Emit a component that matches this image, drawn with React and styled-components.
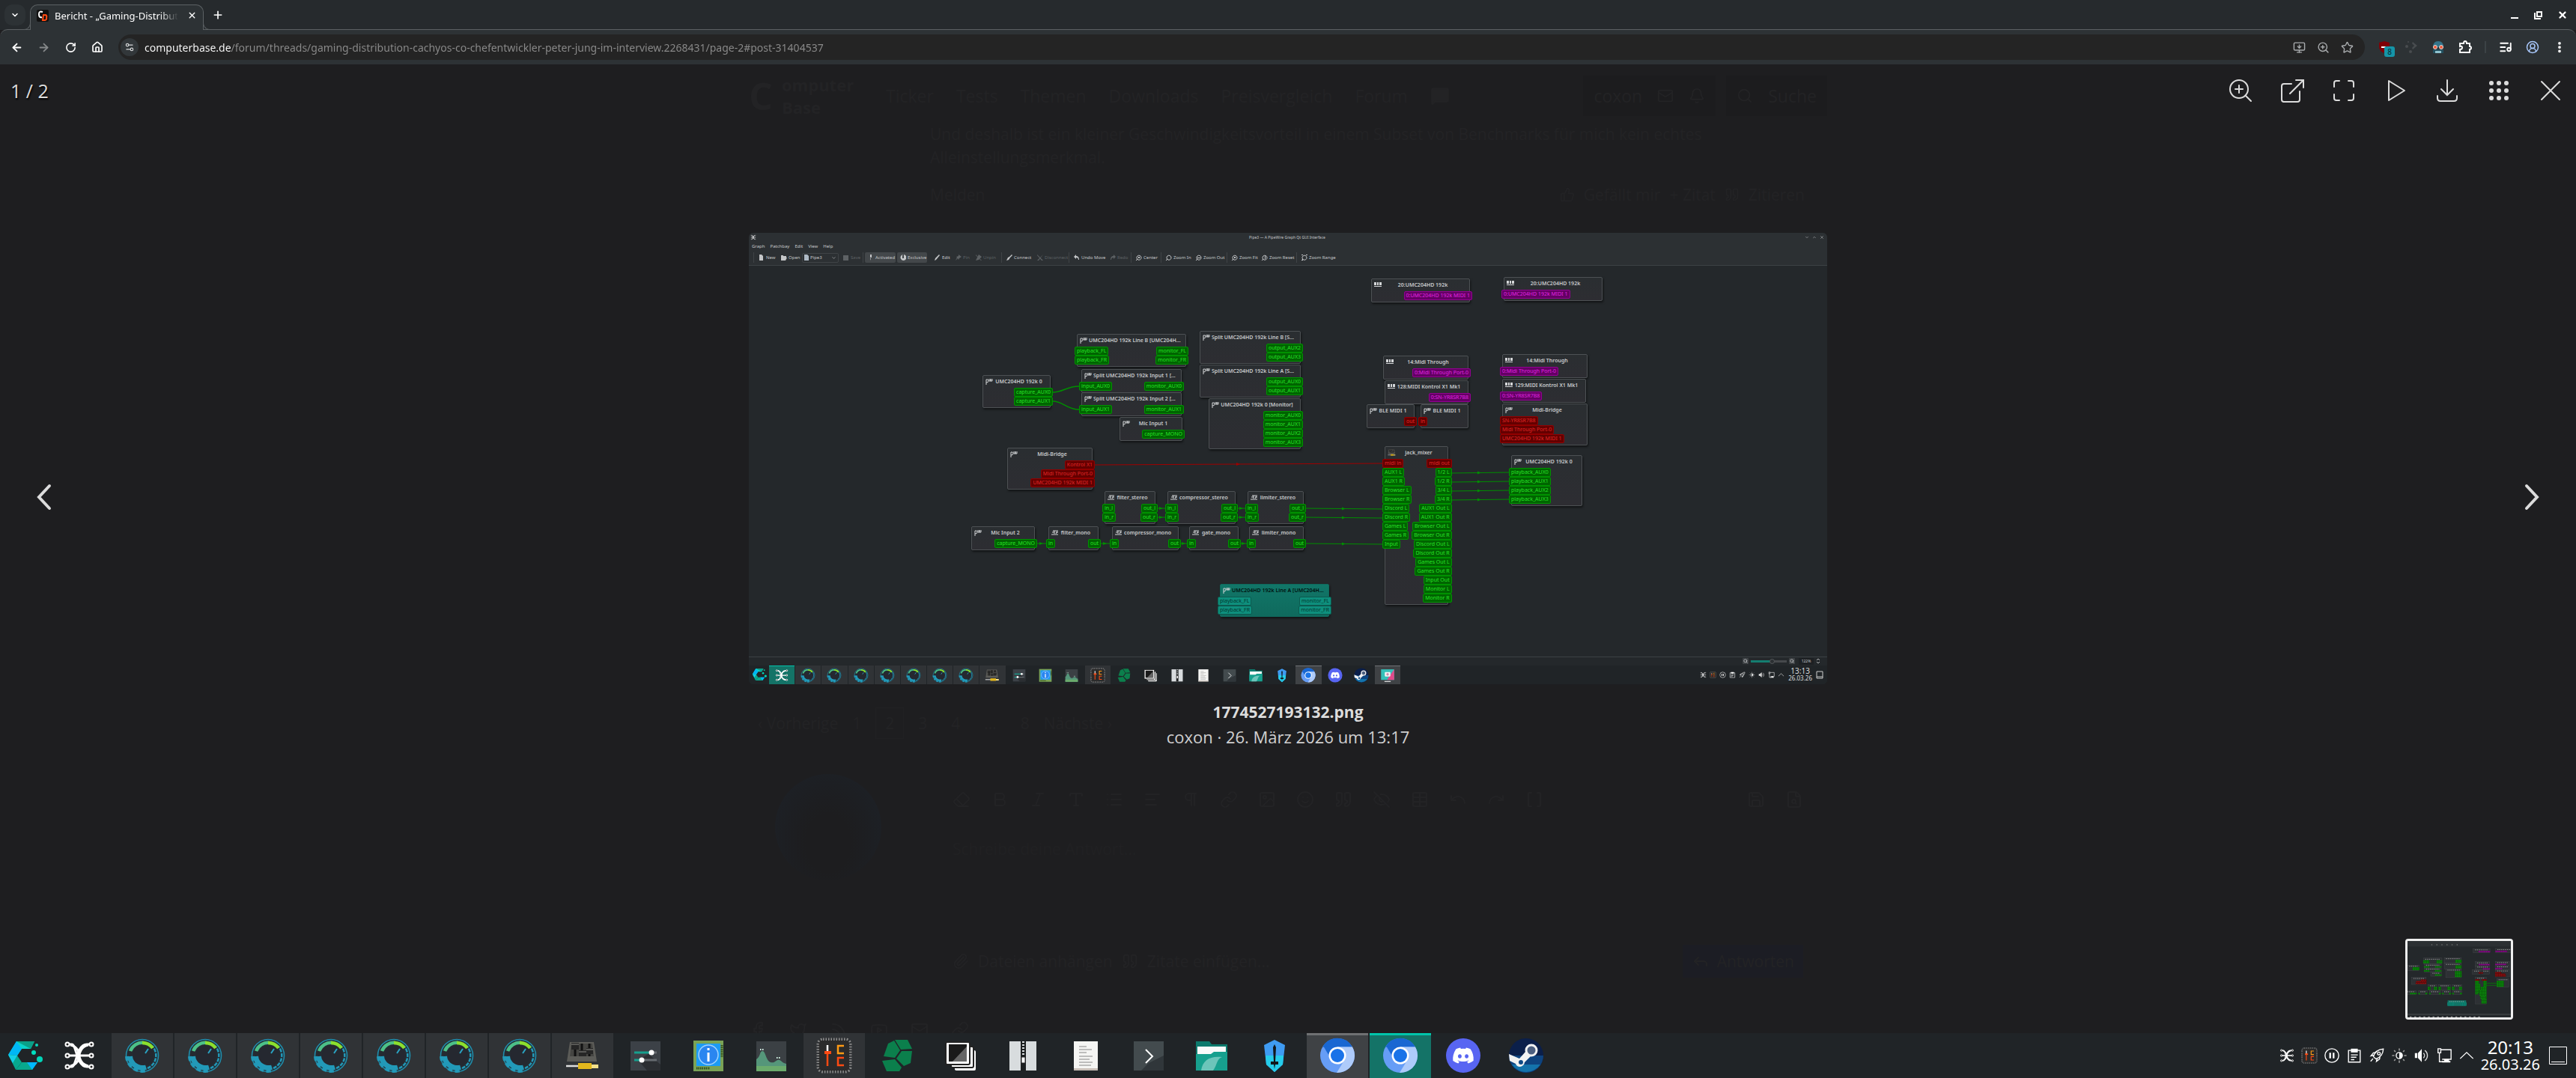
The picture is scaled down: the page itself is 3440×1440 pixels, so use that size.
import React from 'react';
import styled, { createGlobalStyle, css } from 'styled-components';
import {
  ArrowLeft, ArrowRight, RotateCw, House, Settings2, MonitorDown, ZoomIn, Star,
  ListMusic, CircleUserRound, EllipsisVertical, Plus, X, ChevronDown, ChevronUp,
  Mail, Bell, Search, ThumbsUp, Quote, Paperclip, Reply, Link, Image, Smile,
  EyeOff, Table, List, AlignLeft, Pilcrow, Bold, Italic, Type, Eraser, Undo, Redo,
  Brackets, Save, FileSearch, MessageSquare, Facebook, Twitter, Rss, Youtube,
} from 'lucide-react';
import { FaDiscord, FaSteamSymbol } from 'react-icons/fa';

const UI_FONT = '"Noto Sans", sans-serif';
const PAGE_FONT = '"Open Sans", sans-serif';

const COLORS = {
  page: '#1e1e20',
  ghost: '#232325',
  strip: '#262a2d',
  toolbar: '#2d3235',
  outline: '#5c6164',
  panel: '#202427',
  panelItem: '#303336',
  accent: '#147367',
  accentLine: '#00c5ab',
  light: '#dcdcdc',
};

const PORTS = {
  green: { fill: '#006400', line: '#009200', text: '#27e027' },
  purple: { fill: '#640064', line: '#920092', text: '#e027e0' },
  red: { fill: '#640000', line: '#920000', text: '#e02727' },
  teal: { fill: '#0e8f7d', line: '#0c5a4f', text: '#02382f' },
};

const GlobalStyle = createGlobalStyle`
  *, *::before, *::after { box-sizing: border-box; }
  body { margin: 0; background: ${COLORS.page}; }
  button { border: 0; padding: 0; background: none; color: inherit; font: inherit; }
  svg { display: block; flex: none; }
`;

/* ---------- data ---------- */

const g = names => names.map(name => ({ name, kind: 'green' }));
const r = names => names.map(name => ({ name, kind: 'red' }));
const p = names => names.map(name => ({ name, kind: 'purple' }));

const NODES = [
  { x: 312, y: 190, w: 91, title: 'UMC204HD 192k 0', icon: 'pw', out: g(['capture_AUX0', 'capture_AUX1']) },
  { x: 438, y: 135, w: 146, title: 'UMC204HD 192k Line B [UMC204H...', icon: 'pw', in: g(['playback_FL', 'playback_FR']), out: g(['monitor_FL', 'monitor_FR']) },
  { x: 444, y: 182, w: 134, title: 'Split UMC204HD 192k Input 1 [...', icon: 'pw', in: g(['input_AUX0']), out: g(['monitor_AUX0']) },
  { x: 444, y: 213, w: 134, title: 'Split UMC204HD 192k Input 2 [...', icon: 'pw', in: g(['input_AUX1']), out: g(['monitor_AUX1']) },
  { x: 495, y: 246, w: 84, title: 'Mic Input 1', icon: 'pw', out: g(['capture_MONO']) },
  { x: 602, y: 131, w: 135, title: 'Split UMC204HD 192k Line B [S...', icon: 'pw', out: g(['output_AUX2', 'output_AUX3']) },
  { x: 602, y: 176, w: 135, title: 'Split UMC204HD 192k Line A [S...', icon: 'pw', out: g(['output_AUX0', 'output_AUX1']) },
  { x: 614, y: 221, w: 123, title: 'UMC204HD 192k 0 [Monitor]', icon: 'pw', out: g(['monitor_AUX0', 'monitor_AUX1', 'monitor_AUX2', 'monitor_AUX3']) },
  { x: 345, y: 287, w: 114, title: 'Midi-Bridge', icon: 'pw', out: r(['Kontrol X1', 'Midi Through Port-0', 'UMC204HD 192k MIDI 1']) },
  { x: 475, y: 345, w: 68, title: 'filter_stereo', icon: 'jack', in: g(['in_l', 'in_r']), out: g(['out_l', 'out_r']) },
  { x: 559, y: 345, w: 91, title: 'compressor_stereo', icon: 'jack', in: g(['in_l', 'in_r']), out: g(['out_l', 'out_r']) },
  { x: 666, y: 345, w: 75, title: 'limiter_stereo', icon: 'jack', in: g(['in_l', 'in_r']), out: g(['out_l', 'out_r']) },
  { x: 297, y: 392, w: 85, title: 'Mic Input 2', icon: 'pw', out: g(['capture_MONO']) },
  { x: 400, y: 392, w: 67, title: 'filter_mono', icon: 'jack', in: g(['in']), out: g(['out']) },
  { x: 485, y: 392, w: 89, title: 'compressor_mono', icon: 'jack', in: g(['in']), out: g(['out']) },
  { x: 588, y: 392, w: 66, title: 'gate_mono', icon: 'jack', in: g(['in']), out: g(['out']) },
  { x: 668, y: 392, w: 73, title: 'limiter_mono', icon: 'jack', in: g(['in']), out: g(['out']) },
  {
    x: 629, y: 469, w: 146, title: 'UMC204HD 192k Line A [UMC204H...', icon: 'pw', selected: true,
    in: [{ name: 'playback_FL', kind: 'teal' }, { name: 'playback_FR', kind: 'teal' }],
    out: [{ name: 'monitor_FL', kind: 'teal' }, { name: 'monitor_FR', kind: 'teal' }],
  },
  { x: 831, y: 61, w: 132, title: '20:UMC204HD 192k', icon: 'alsa', out: p(['0:UMC204HD 192k MIDI 1']) },
  { x: 1008, y: 59, w: 132, title: '20:UMC204HD 192k', icon: 'alsa', in: p(['0:UMC204HD 192k MIDI 1']) },
  { x: 847, y: 164, w: 114, title: '14:Midi Through', icon: 'alsa', out: p(['0:Midi Through Port-0']) },
  { x: 1006, y: 162, w: 114, title: '14:Midi Through', icon: 'alsa', in: p(['0:Midi Through Port-0']) },
  { x: 849, y: 197, w: 112, title: '128:MIDI Kontrol X1 Mk1', icon: 'alsa', out: p(['0:SN-YR8SR7B8']) },
  { x: 1006, y: 195, w: 112, title: '129:MIDI Kontrol X1 Mk1', icon: 'alsa', in: p(['0:SN-YR8SR7B8']) },
  { x: 825, y: 229, w: 64, title: 'BLE MIDI 1', icon: 'pw', out: r(['out']) },
  { x: 897, y: 229, w: 64, title: 'BLE MIDI 1', icon: 'pw', in: r(['in']) },
  { x: 1006, y: 228, w: 114, title: 'Midi-Bridge', icon: 'pw', in: r(['SN-YR8SR7B8', 'Midi Through Port-0', 'UMC204HD 192k MIDI 1']) },
  {
    x: 849, y: 285, w: 85, title: 'jack_mixer', icon: 'mixer',
    in: [...r(['midi in']), ...g(['AUX1 L', 'AUX1 R', 'Browser L', 'Browser R', 'Discord L', 'Discord R', 'Games L', 'Games R', 'Input'])],
    out: [...r(['midi out']), ...g(['1/2 L', '1/2 R', '3/4 L', '3/4 R', 'AUX1 Out L', 'AUX1 Out R', 'Browser Out L', 'Browser Out R', 'Discord Out L', 'Discord Out R', 'Games Out L', 'Games Out R', 'Input Out', 'Monitor L', 'Monitor R'])],
  },
  { x: 1018, y: 297, w: 95, title: 'UMC204HD 192k 0', icon: 'pw', in: g(['playback_AUX0', 'playback_AUX1', 'playback_AUX2', 'playback_AUX3']) },
];

// [x1, y1, x2, y2, colour]
const WIRES = [
  [546, 368, 556, 368], [546, 380, 556, 380], [653, 368, 663, 368], [653, 380, 663, 380],
  [744, 368, 846, 369], [744, 380, 846, 381],
  [385, 415, 397, 415], [470, 415, 482, 415], [577, 415, 585, 415], [657, 415, 665, 415],
  [744, 415, 846, 416],
  [937, 321, 1015, 320], [937, 333, 1015, 332], [937, 345, 1015, 344], [937, 357, 1015, 356],
  [462, 310, 846, 308, '#a00000'],
];

const GAUGES = Array.from({ length: 7 }, () => ({ icon: 'gauge', label: 'CoreCtrl monitor', state: 'open' }));

const COMMON_TASKS = [
  ...GAUGES,
  { icon: 'mixer', label: 'jack_mixer', state: 'open' },
  { icon: 'sliders', label: 'System settings' },
  { icon: 'info', label: 'Info center' },
  { icon: 'graph', label: 'System monitor' },
  { icon: 'cc', label: 'CoolerControl', state: 'open' },
  { icon: 'hexes', label: 'Package installer' },
  { icon: 'cards', label: 'Windows' },
  { icon: 'zip', label: 'Ark' },
  { icon: 'doc', label: 'Text editor' },
  { icon: 'shell', label: 'Konsole' },
  { icon: 'folder', label: 'Dolphin' },
  { icon: 'sword', label: 'Heroic' },
];

const TASKS = [
  { icon: 'pipes', label: 'Pipe3' },
  ...COMMON_TASKS,
  { icon: 'chromium', label: 'Chromium', state: 'raised' },
  { icon: 'chromium', label: 'Chromium, active', state: 'active' },
  { icon: 'discord', label: 'Discord' },
  { icon: 'steam', label: 'Steam' },
];

const SHOT_TASKS = [
  { icon: 'pipes', label: 'Pipe3', state: 'active' },
  ...COMMON_TASKS,
  { icon: 'chromium', label: 'Chromium', state: 'raised' },
  { icon: 'discord', label: 'Discord' },
  { icon: 'steam', label: 'Steam' },
  { icon: 'screen', label: 'Spectacle', state: 'raised' },
];

const TRAY = ['pipes', 'cc', 'pause', 'clipboard', 'rocket', 'sun', 'volume', 'display', 'caret'];

/* ---------- drawings ---------- */

const ART = {
  cachy: (
    <>
      <path d="M13 5h24l-5 10H20l-6 9-12-1z" fill="#0ad3c8" />
      <path d="M13 5l7 10-6 9L2 23z" fill="#00b7f5" />
      <path d="M13 5h24l-5 10z" fill="#0a9f87" />
      <path d="M2 23l12 1 6 9-8 10z" fill="#07a98f" />
      <path d="M2 23l12 1-6 10z" fill="#13cfe8" />
      <path d="M20 33h21l-7 10H12z" fill="#08a88d" />
      <path d="M27 33h14l-7 10z" fill="#00b9ff" />
      <circle cx="40" cy="10" r="2" fill="#0ad3b8" />
      <circle cx="36" cy="20" r="3" fill="#00e0c0" />
      <circle cx="44" cy="29" r="4" fill="#00d5b8" />
    </>
  ),
  pipes: (
    <g fill="none" stroke="#fff" strokeWidth="3">
      <path d="M10 9h4c6 0 6 30 20 30h4M10 39h4c6 0 6-30 20-30h4M10 24h28" />
      <path d="M12 10c10 2 12 11 12 14s2 12 12 14M36 10c-10 2-12 11-12 14s-2 12-12 14" />
      <g fill="#222" strokeWidth="2">
        <circle cx="8" cy="9" r="2.5" /><circle cx="8" cy="24" r="2.5" /><circle cx="8" cy="39" r="2.5" />
        <circle cx="40" cy="9" r="2.5" /><circle cx="40" cy="24" r="2.5" /><circle cx="40" cy="39" r="2.5" />
      </g>
    </g>
  ),
  gauge: (
    <>
      <circle cx="24" cy="24" r="21.500" fill="#252a31" stroke="#1f8dab" strokeWidth="1.600" />
      <path d="M3.500 25A20.500 20.500 0 0 0 30 43.500" fill="none" stroke="#2299b8" strokeWidth="5" strokeDasharray="6 3.500" />
      <path d="M7.500 25A16.500 16.500 0 0 0 29 39.500" fill="none" stroke="#2299b8" strokeWidth="7" />
      <path d="M31 41A18.500 18.500 0 0 0 37 11" fill="none" stroke="#2299b8" strokeWidth="2.500" strokeDasharray="5 1.500" />
      <path d="M8 18A17 17 0 0 1 26 7" fill="none" stroke="#4cc088" strokeWidth="4.500" />
      <path d="M24 7A17 17 0 0 1 38 14" fill="none" stroke="#8be02e" strokeWidth="4.500" />
      <circle cx="25" cy="24" r="13" fill="#252830" />
      <path d="M32 15l-4 6" stroke="#2aa4c4" strokeWidth="2" />
    </>
  ),
  mixer: (
    <>
      <path d="M7 6h32l4 26H3z" fill="#5c5c58" />
      <path d="M9 8h28l2 17H7z" fill="#454542" />
      <path d="M14 8v17M23 8v17M33 8v17" stroke="#111" strokeWidth="3" />
      <path d="M9 7h10v9H9zM19 17h10v8H19zM29 14h9v8h-9z" fill="#262626" />
      <path d="M9 9h10M19 19h10M29 16h9" stroke="#8a8a86" />
      <path d="M2 38h18" stroke="#ddd" strokeWidth="2.500" />
      <path d="M18 34h18v8H18z" fill="#e2b71d" />
      <path d="M36 36h9v5h-9z" fill="#f4e08a" />
    </>
  ),
  sliders: (
    <>
      <rect x="4" y="5" width="40" height="39" fill="#3c4147" />
      <path d="M14 30l14-8 16 14v8H26z" fill="#2b2e32" />
      <path d="M9 20h22M9 30h8" stroke="#16a08e" strokeWidth="3" />
      <path d="M31 20h8M19 30h20" stroke="#666b70" strokeWidth="3" />
      <circle cx="32" cy="20" r="3.500" fill="#fff" />
      <circle cx="19" cy="30" r="3.500" fill="#fff" />
    </>
  ),
  info: (
    <>
      <rect x="4" y="4" width="40" height="41" fill="#7aa356" />
      <path d="M8 41h18M42 10v16" stroke="#2d4b1c" strokeWidth="3" strokeDasharray="1.500 1" />
      <rect x="8" y="8" width="32" height="30" fill="#1c9bf4" />
      <circle cx="24" cy="23" r="13" fill="#2a86f0" stroke="#9fd2ff" strokeWidth="1.500" />
      <path d="M24 20v12M24 14v3" stroke="#fff" strokeWidth="3" />
    </>
  ),
  graph: (
    <>
      <rect x="4" y="5" width="40" height="40" fill="#3b4044" />
      <path d="M4 29c6-4 4-10 8-11s5 13 11 15 8-5 12-3 4 4 9 5v10H4z" fill="#55967a" />
      <path d="M4 38h40v7H4z" fill="#6bab6c" />
      <path d="M9 16h6M31 27h6" stroke="#dfe" strokeWidth="2" strokeDasharray="1.500 1.500" />
    </>
  ),
  cc: (
    <>
      <rect x="3" y="3" width="42" height="42" rx="6" fill="#2a2a2a" stroke="#8d8d8d" strokeWidth="5" strokeDasharray="1.500 2" />
      <rect x="4" y="4" width="40" height="40" rx="4" fill="#2b2b2b" />
      <path d="M15 10v10" stroke="#fff" strokeWidth="2.500" />
      <path d="M15 20v18" stroke="#ff4a12" strokeWidth="2.500" />
      <path d="M11 20h9" stroke="#ff4a12" strokeWidth="4" />
      <path d="M37 11h-8v10h8" fill="none" stroke="#ff9a14" strokeWidth="2.500" />
      <path d="M37 27h-8v10h8" fill="none" stroke="#ff4a12" strokeWidth="2.500" />
    </>
  ),
  hexes: (
    <g fill="#0b7f4c">
      <path d="M21 3h17l6 12-15 1z" />
      <path d="M12 8l8-4 8 13-7 10-15-2z" />
      <path d="M30 18h14l-2 16-9 4-10-10z" />
      <path d="M4 31l17-2 9 11-3 5H10z" />
    </g>
  ),
  cards: (
    <g>
      <rect x="17" y="17" width="28" height="27" rx="2" fill="#fff" />
      <rect x="12" y="12" width="30" height="28" rx="2" fill="#fff" stroke="#222" strokeWidth="2" />
      <rect x="5" y="6" width="32" height="30" rx="2" fill="#fff" stroke="#222" strokeWidth="2" />
      <rect x="9" y="9" width="24" height="23" fill="#1a1a1a" />
      <path d="M33 12v20H14z" fill="#666" />
    </g>
  ),
  zip: (
    <>
      <rect x="6" y="5" width="36" height="39" fill="#d8dcde" />
      <rect x="21" y="5" width="7" height="39" fill="#1c1f20" />
      <path d="M24.500 5v20" stroke="#d8dcde" strokeWidth="3" strokeDasharray="2 2" />
      <rect x="22" y="26" width="5" height="8" fill="#fff" stroke="#222" />
    </>
  ),
  doc: (
    <>
      <rect x="8" y="5" width="32" height="39" fill="#f5f5f3" />
      <path d="M8 41h32v3H8z" fill="#c9bfb8" />
      <path d="M15 12h10M15 16h17M15 20h10M15 25h18M15 29h14M15 33h18M15 37h16" stroke="#aaa" strokeWidth="1.500" />
    </>
  ),
  shell: (
    <>
      <rect x="4" y="5" width="40" height="39" fill="#434b4e" />
      <path d="M24 34l20-10v20H14z" fill="#30363a" />
      <path d="M20 16l9 9-9 9" fill="none" stroke="#fff" strokeWidth="2" />
    </>
  ),
  folder: (
    <>
      <path d="M3 5h18l3 4h21v30H3z" fill="#0d7a6d" />
      <rect x="5" y="12" width="38" height="14" fill="#fafafa" />
      <path d="M3 22h20l4-3h18v25H3z" fill="#17a08e" />
      <path d="M10 44c2-14 12-20 28-18-8 3-6 10-12 18z" fill="#6cc5ba" />
    </>
  ),
  sword: (
    <>
      <path d="M24 3l14 7-3 26-11 10-11-10-3-26z" fill="#3f9bf2" />
      <path d="M12 24h24l-1 12-11 10-11-10z" fill="#25cdea" />
      <path d="M24 9l2 4-1 19h4v4h-4l-1 6-1-6h-4v-4h4l-1-19z" fill="#12181c" />
    </>
  ),
  chromium: (
    <>
      <circle cx="24" cy="24" r="23" fill="#669df6" />
      <path d="M4 12.500A23 23 0 0 1 44 12.500H24z" fill="#1967d2" />
      <path d="M5 11l10 17 9-16z" fill="#1967d2" />
      <path d="M44 12.500A23 23 0 0 1 23 47l11-18-10-16.500z" fill="#aecbfa" />
      <circle cx="24" cy="24" r="11.500" fill="#fff" />
      <circle cx="24" cy="24" r="9" fill="#1a73e8" />
    </>
  ),
  discord: (
    <>
      <circle cx="24" cy="24" r="23" fill="#5865f2" />
      <FaDiscord x="9" y="9" size="30" color="#fff" />
    </>
  ),
  steam: (
    <>
      <circle cx="24" cy="24" r="23" fill="#0b1f4a" />
      <path d="M1 24a23 23 0 0 0 46 0z" fill="#0e4480" />
      <path d="M5 36a23 23 0 0 0 38 0z" fill="#1473ab" />
      <path d="M1 22l14 6 8-9 7 6-8 8c-1 7-10 8-12 2l-8-4z" fill="#f2f2f2" />
      <circle cx="31" cy="17" r="7" fill="#4c5f80" stroke="#f2f2f2" strokeWidth="3" />
      <circle cx="17" cy="33" r="3" fill="#0e4a86" />
    </>
  ),
  screen: (
    <>
      <rect x="3" y="5" width="42" height="34" fill="#35c0b9" />
      <path d="M45 5v34H22z" fill="#e14a8a" />
      <rect x="15" y="14" width="18" height="14" rx="2" fill="#f4f4f4" />
      <circle cx="24" cy="21" r="4" fill="#c98bb0" />
      <path d="M14 44h20" stroke="#ddd" strokeWidth="3" />
    </>
  ),
  pause: (
    <g fill="none" stroke="#fff">
      <circle cx="24" cy="24" r="20" strokeWidth="3" />
      <path d="M19 16v16M29 16v16" strokeWidth="5" />
    </g>
  ),
  clipboard: (
    <>
      <path d="M7 9h34v34H7z" fill="none" stroke="#fff" strokeWidth="3" />
      <path d="M14 4h20v11H14z" fill="#fff" />
      <path d="M14 22h20M14 29h16M14 36h10" stroke="#fff" strokeWidth="3" />
    </>
  ),
  rocket: (
    <g fill="none" stroke="#fff" strokeWidth="3">
      <path d="M14 27C18 14 28 6 43 5c-1 15-9 25-22 29z" />
      <circle cx="30" cy="18" r="4" />
      <path d="M16 23l-9 2 7-9 7-1M25 32l-2 9 9-7 1-7M13 33l-7 8" />
    </g>
  ),
  sun: (
    <>
      <circle cx="24" cy="24" r="9" fill="none" stroke="#fff" strokeWidth="3" />
      <path d="M24 15a9 9 0 0 1 0 18z" fill="#fff" />
      <path d="M24 3v7M24 38v7M3 24h7M38 24h7M9 9l4 4M35 35l4 4M39 9l-4 4M9 39l4-4" stroke="#999" strokeWidth="3.500" />
    </>
  ),
  volume: (
    <>
      <path d="M4 17h7v14H4zM13 17L24 5v38L13 31z" fill="#fff" />
      <path d="M29 17c4 4 4 10 0 14M33 9c10 8 10 22 0 30" fill="none" stroke="#ddd" strokeWidth="3" />
    </>
  ),
  display: (
    <>
      <path d="M14 7h30v28H18M6 4h8v12H6zM10 16v26h12" fill="none" stroke="#fff" strokeWidth="3" />
      <path d="M24 35h14v5h4v4H18v-4h6z" fill="#fff" />
    </>
  ),
  caret: <path d="M5 33l19-18 19 18" fill="none" stroke="#fff" strokeWidth="3" />,
};

const Art = ({ name, size }) => (
  <svg width={size} height={size} viewBox="0 0 48 48" aria-hidden="true">{ART[name]}</svg>
);

const LINE_ICONS = {
  zoom: <><circle cx="14" cy="14" r="12" /><path d="M22.500 22.500L30 30M14 9v10M9 14h10" /></>,
  open: <path d="M15 7H5q-3 0-3 3v18q0 3 3 3h18q3 0 3-3V17M13 20L31 2M21 2h10v10" />,
  full: <path d="M3 11V6q0-3 3-3h4M22 3h4q3 0 3 3v5M29 21v5q0 3-3 3h-4M10 29H6q-3 0-3-3v-5" />,
  play: <path d="M7 3v26l21-13z" strokeLinejoin="round" />,
  down: <path d="M16 2v20M8 14l8 8 8-8M3 23v3q0 4 4 4h18q4 0 4-4v-3" />,
  grid: (
    <g fill="currentColor" stroke="none">
      {[6, 16, 26].map(y => [6, 16, 26].map(x => <circle key={`${x}-${y}`} cx={x} cy={y} r="3" />))}
    </g>
  ),
  close: <path d="M4 4l24 24M28 4L4 28" />,
};

const Line = ({ name }) => (
  <svg width="32" height="32" viewBox="0 0 32 32" fill="none" stroke="currentColor" strokeWidth="2" strokeLinecap="round">
    {LINE_ICONS[name]}
  </svg>
);

/* ---------- browser chrome ---------- */

const Screen = styled.div`
  display: flex;
  flex-direction: column;
  height: 100vh;
  overflow: hidden;
  font-family: ${UI_FONT};
  color: #fff;
`;

const TabStrip = styled.header`
  display: flex;
  align-items: flex-end;
  height: 40px;
  padding: 0 6px;
  background: ${COLORS.strip};
`;

const TabSearch = styled.button`
  display: grid;
  place-items: center;
  width: 28px;
  height: 28px;
  margin: 0 6px 6px 0;
  border-radius: 10px;
  background: #2d3235;
`;

const Tab = styled.div`
  position: relative;
  z-index: 1;
  display: flex;
  align-items: center;
  width: 232px;
  height: 34px;
  padding: 0 8px 6px;
  border: 1px solid ${COLORS.outline};
  border-bottom: 0;
  border-radius: 10px 10px 0 0;
  background: ${COLORS.toolbar};

  &::before, &::after {
    content: '';
    position: absolute;
    bottom: 0;
    width: 9px;
    height: 9px;
    border-bottom: 1px solid ${COLORS.outline};
    background: ${COLORS.strip};
  }
  &::before {
    left: -9px;
    border-right: 1px solid ${COLORS.outline};
    border-bottom-right-radius: 9px;
  }
  &::after {
    right: -9px;
    border-left: 1px solid ${COLORS.outline};
    border-bottom-left-radius: 9px;
  }
`;

const TabTitle = styled.span`
  flex: 1;
  margin: 0 12px 0 8px;
  overflow: hidden;
  white-space: nowrap;
  font-size: 13px;
  line-height: 20px;
  mask-image: linear-gradient(to right, #000 85%, transparent);
`;

const NewTab = styled.button`
  display: grid;
  place-items: center;
  width: 38px;
  height: 40px;
`;

const WindowButtons = styled.div`
  display: flex;
  align-items: center;
  height: 40px;
  margin-left: auto;
`;

const WindowButton = styled.button`
  display: grid;
  place-items: center;
  width: 32px;
  height: 32px;
  &:last-child { width: 24px; margin-left: 4px; }
`;

const Toolbar = styled.nav`
  display: flex;
  align-items: center;
  height: 47px;
  margin-top: -1px;
  padding: 0 4px;
  border-top: 1px solid ${COLORS.outline};
  border-radius: 10px 10px 0 0;
  background: ${COLORS.toolbar};
  flex: none;
`;

const ToolButton = styled.button`
  position: relative;
  display: grid;
  place-items: center;
  width: 36px;
  height: 34px;
  color: ${props => (props.$dim ? '#85888a' : props.$blue ? '#a8c7fa' : '#fff')};
`;

const Omnibox = styled.div`
  display: flex;
  align-items: center;
  flex: 1;
  height: 34px;
  margin: 0 8px 0 10px;
  padding: 0 8px 0 3px;
  border-radius: 17px;
  background: #242424;
  color: #a8abad;
`;

const SiteChip = styled.button`
  display: grid;
  place-items: center;
  width: 24px;
  height: 24px;
  border-radius: 12px;
  background: #32373a;
  color: #d8dadb;
`;

const Address = styled.input`
  flex: 1;
  height: 24px;
  margin-left: 8px;
  padding: 0;
  border: 0;
  outline: 0;
  font-family: ${UI_FONT};
  font-size: 14px;
  color: #9a9a9a;
  background: linear-gradient(to right, #fff 116px, #8b8b8b 116px);
  background-clip: text;
  -webkit-text-fill-color: transparent;
`;

const OmniButton = styled.button`
  display: grid;
  place-items: center;
  width: 32px;
  height: 32px;
`;

const Badge = styled.span`
  position: absolute;
  left: 18px;
  top: 16px;
  width: 14px;
  height: 14px;
  border-radius: 3px;
  background: #1595a8;
  color: #062a30;
  font-size: 10px;
  line-height: 14px;
  text-align: center;
`;

const Divider = styled.span`
  width: 2px;
  height: 16px;
  margin: 0 8px;
  background: #3c4346;
`;

const Favicon = () => (
  <svg width="16" height="16" viewBox="0 0 16 16">
    <rect width="16" height="16" rx="2" fill="#111" />
    <path d="M8 3Q3 1 3 6t4 4" fill="none" stroke="#fff" strokeWidth="2" />
    <path d="M9 7l-1 7h3q3-1 2-3 1-3-1-4z" fill="none" stroke="#ff4a12" strokeWidth="2" />
  </svg>
);

const BrowserChrome = () => (
  <>
    <TabStrip>
      <TabSearch aria-label="Search tabs"><ChevronDown size={12} strokeWidth={3} /></TabSearch>
      <Tab>
        <Favicon />
        <TabTitle>Bericht - „Gaming-Distribution</TabTitle>
        <button aria-label="Close tab"><X size={13} strokeWidth={2.5} /></button>
      </Tab>
      <NewTab aria-label="New tab"><Plus size={16} strokeWidth={2.5} /></NewTab>
      <WindowButtons>
        <WindowButton aria-label="Minimize">
          <svg width="12" height="12"><path d="M1 10h10" stroke="#fff" strokeWidth="2" /></svg>
        </WindowButton>
        <WindowButton aria-label="Restore">
          <svg width="12" height="12" fill="none" stroke="#fff" strokeWidth="2"><path d="M4 2h6v6H4zM1 3v8h8" /></svg>
        </WindowButton>
        <WindowButton aria-label="Close"><X size={14} strokeWidth={4} /></WindowButton>
      </WindowButtons>
    </TabStrip>
    <Toolbar>
      <ToolButton aria-label="Back"><ArrowLeft size={17} strokeWidth={2.5} /></ToolButton>
      <ToolButton aria-label="Forward" $dim><ArrowRight size={17} strokeWidth={2.5} /></ToolButton>
      <ToolButton aria-label="Reload"><RotateCw size={15} strokeWidth={2.5} /></ToolButton>
      <ToolButton aria-label="Home"><House size={16} strokeWidth={2.5} /></ToolButton>
      <Omnibox>
        <SiteChip aria-label="Site information"><Settings2 size={14} /></SiteChip>
        <Address
          aria-label="Address"
          defaultValue="computerbase.de/forum/threads/gaming-distribution-cachyos-co-chefentwickler-peter-jung-im-interview.2268431/page-2#post-31404537"
        />
        <OmniButton aria-label="Install"><MonitorDown size={17} /></OmniButton>
        <OmniButton aria-label="Zoom"><ZoomIn size={17} /></OmniButton>
        <OmniButton aria-label="Bookmark"><Star size={17} /></OmniButton>
      </Omnibox>
      <ToolButton aria-label="uBlock">
        <svg width="16" height="16"><path d="M8 0l7 2v6q0 5-7 8-7-3-7-8V2z" fill="#800006" /><path d="M4 8h6" stroke="#fff" strokeWidth="2" /></svg>
        <Badge>8</Badge>
      </ToolButton>
      <ToolButton aria-label="Extension">
        <svg width="16" height="18" fill="#484c4f"><path d="M10 2l6 5-6 5-1-2 3-3-3-3z" /><circle cx="4" cy="2" r="1" /><circle cx="2" cy="8" r="2" /><circle cx="7" cy="15" r="2" /></svg>
      </ToolButton>
      <ToolButton aria-label="User agent">
        <svg width="16" height="16"><path d="M1 8q0-8 7-8t7 8z" fill="#35748a" /><path d="M1 11h14v5H1z" fill="#24505f" /><path d="M4 13h8v3H4z" fill="#8fc3cf" /><circle cx="4" cy="8" r="2.500" fill="#f05a3a" stroke="#ddd" /><circle cx="12" cy="8" r="2.500" fill="#f05a3a" stroke="#ddd" /></svg>
      </ToolButton>
      <ToolButton aria-label="Extensions">
        <svg width="18" height="18" fill="none" stroke="#fff" strokeWidth="2"><path d="M2 4h5q0-3 2-3t2 3h4v4q2 0 2 2t-2 2v4H2v-4q3 0 3-2.500T2 8z" /></svg>
      </ToolButton>
      <Divider />
      <ToolButton aria-label="Media"><ListMusic size={18} strokeWidth={2.5} /></ToolButton>
      <ToolButton aria-label="Profile" $blue><CircleUserRound size={18} /></ToolButton>
      <ToolButton aria-label="Menu"><EllipsisVertical size={18} strokeWidth={3} /></ToolButton>
    </Toolbar>
  </>
);

/* ---------- forum page behind the lightbox ---------- */

const Forum = styled.div`
  width: 1440px;
  margin: 0 auto;
  color: ${COLORS.ghost};
  font-family: ${PAGE_FONT};
  font-size: 21px;
`;

const ForumNav = styled.div`
  display: flex;
  align-items: center;
  gap: 30px;
  height: 84px;
  font-size: 23px;
`;

const ForumLogo = styled.div`
  display: grid;
  grid-template-columns: 44px 1fr;
  align-items: center;
  width: 153px;
  font-size: 22px;
  line-height: 30px;
  font-weight: 700;
`;

const LogoInitial = styled.span`
  font-size: 50px;
  line-height: 72px;
`;

const LogoWords = styled.span`
  display: flex;
  flex-direction: column;
`;

const NavBox = styled.div`
  display: flex;
  align-items: center;
  gap: 20px;
  height: 54px;
  margin-left: ${props => (props.$push ? 'auto' : '-16px')};
  padding: 0 14px;
  background: #1c1c1e;
`;

const Post = styled.div`
  margin-top: -6px;
  padding: 0 30px 0 242px;
  line-height: 31px;
`;

const GhostRow = styled.div`
  display: flex;
  align-items: center;
  gap: ${props => props.$gap || 8}px;
  height: ${props => props.$height || 44}px;
  > :nth-child(${props => props.$push || 99}) { margin-left: auto; }
`;

const Pages = styled(GhostRow)`
  margin-top: 650px;
  padding-left: 12px;
`;

const PageNumber = styled.span`
  padding: 6px 12px;
  border: 1px solid ${props => (props.$current ? '#212123' : 'transparent')};
`;

const ReplyForm = styled.div`
  display: grid;
  grid-template-columns: 142px 1fr;
  gap: 95px;
  margin: 46px 32px 0 35px;
`;

const Avatar = styled.div`
  width: 142px;
  height: 142px;
  border-radius: 50%;
  background: radial-gradient(ellipse at 50% 65%, #1d1d1f 30%, #1d2025 75%);
`;

const Placeholder = styled.p`
  margin: 18px 0 114px;
  color: #212123;
`;

const SendGhost = styled.span`
  display: flex;
  align-items: center;
  gap: 10px;
  height: 44px;
  padding: 0 12px;
  background: #1c1d24;
`;

const ForumPage = () => (
  <Forum aria-hidden="true">
    <ForumNav>
      <ForumLogo>
        <LogoInitial>C</LogoInitial>
        <LogoWords><span>omputer</span><span>Base</span></LogoWords>
      </ForumLogo>
      <span>Ticker</span><span>Tests</span><span>Themen</span><span>Downloads</span>
      <span>Preisvergleich</span><span>Forum</span><MessageSquare size={26} fill="currentColor" />
      <NavBox $push>coxon <Mail size={22} /><Bell size={22} /></NavBox>
      <NavBox><Search size={22} />Suche</NavBox>
    </ForumNav>
    <Post>
      Und deshalb ist ein kleiner Geschwindigkeitsvorteil in einem Subset von Benchmarks für mich kein echtes<br />
      Alleinstellungsmerkmal.
      <GhostRow $height={68} $gap={12} $push={2}>
        <span>Melden</span><ThumbsUp size={20} /><span>Gefällt mir</span><span>+ Zitat</span><Quote size={20} /><span>Zitieren</span>
      </GhostRow>
    </Post>
    <Pages $gap={6}>
      <span>‹ Vorherige</span>
      <PageNumber>1</PageNumber><PageNumber $current>2</PageNumber><PageNumber>3</PageNumber>
      <PageNumber>4</PageNumber><PageNumber>…</PageNumber><PageNumber>8</PageNumber><span>Nächste ›</span>
    </Pages>
    <ReplyForm>
      <Avatar />
      <div>
        <GhostRow $height={68} $gap={27} $push={17}>
          <Eraser /><Bold /><Italic /><Type /><List /><AlignLeft /><Pilcrow /><Link /><Image /><Smile /><Quote />
          <EyeOff /><Table /><Undo /><Redo /><Brackets /><Save /><FileSearch />
        </GhostRow>
        <Placeholder>Schreibe deine Antwort...</Placeholder>
        <GhostRow $gap={12} $push={5}>
          <Paperclip size={22} /><span>Dateien anhängen</span><Quote size={22} /><span>Zitate einfügen...</span>
          <SendGhost><Reply size={24} />Antworten</SendGhost>
        </GhostRow>
      </div>
    </ReplyForm>
    <GhostRow $height={140} $gap={30}>
      <Facebook /><Twitter /><Rss /><Youtube /><Mail /><Link />
    </GhostRow>
  </Forum>
);

/* ---------- lightbox ---------- */

const Viewport = styled.main`
  position: relative;
  flex: 1;
  min-height: 0;
  overflow: hidden;
  background: ${COLORS.page};
`;

const Lightbox = styled.div`
  position: absolute;
  inset: 0;
  display: flex;
  flex-direction: column;
  color: ${COLORS.light};
  font-family: ${PAGE_FONT};
`;

const LightboxBar = styled.div`
  display: flex;
  align-items: center;
  height: 70px;
  padding-left: 14px;
`;

const Counter = styled.span`
  margin-right: auto;
  font-size: 25px;
  text-shadow: 1px 2px 2px #000;
`;

const BarButton = styled.button`
  display: grid;
  place-items: center;
  width: 69px;
  height: 70px;
`;

const Stage = styled.div`
  display: grid;
  grid-template-columns: 118px 1fr 118px;
  align-items: center;
  justify-items: center;
  flex: 1;
  min-height: 0;
  padding-bottom: 82px;
`;

const Arrow = styled.button`
  display: grid;
  place-items: center;
  width: 118px;
  height: 118px;
`;

const Figure = styled.figure`
  margin: 0;
`;

const Caption = styled.figcaption`
  display: flex;
  flex-direction: column;
  align-items: center;
  padding: 21px 0 17px;
  font-size: 22px;
  line-height: 33px;
  color: #d0d0d0;
`;

const CaptionTitle = styled.strong`
  font-size: 21px;
  font-weight: 700;
  color: ${COLORS.light};
`;

const Thumbs = styled.div`
  display: flex;
  justify-content: flex-end;
  padding: 0 84px 18px;
`;

const Thumb = styled.button`
  width: 144px;
  height: 108px;
  border: 3px solid #eee;
  border-radius: 4px;
  background: #24282b;
  overflow: hidden;
`;

/* ---------- graph screenshot ---------- */

const Shot = styled.div`
  width: 1440px;
  overflow: hidden;
  border-radius: 6px;
  background: #24282b;
  color: #c4c6c8;
  font-family: ${UI_FONT};
  font-size: 6px;
  line-height: 12px;
`;

const ShotHead = styled.div`
  height: 44px;
  border-bottom: 1px solid #3c4144;
  background: #2c3033;
`;

const ShotTitle = styled.div`
  display: grid;
  grid-template-columns: 1fr auto 1fr;
  align-items: center;
  height: 12px;
  padding: 0 4px 0 2px;
  font-size: 5px;
`;

const ShotControls = styled.span`
  display: flex;
  justify-content: flex-end;
  gap: 4px;
`;

const ShotMenu = styled.div`
  display: flex;
  gap: 7px;
  height: 12px;
  padding-left: 4px;
`;

const ShotTools = styled.div`
  display: flex;
  align-items: center;
  height: 19px;
  padding-left: 6px;
`;

const ShotTool = styled.button`
  display: flex;
  align-items: center;
  gap: 2px;
  width: ${props => props.$w}px;
  height: 14px;
  padding-left: 4px;
  white-space: nowrap;
  color: ${props => (props.$off ? '#5d6164' : 'inherit')};
  ${props => props.$checked && css`
    margin-right: 2px;
    border-radius: 2px;
    background: #43474a;
  `}
`;

const ShotSep = styled.span`
  width: 1px;
  height: 14px;
  margin-right: 2px;
  background: #3f4346;
`;

const PatchPicker = styled.span`
  display: flex;
  align-items: center;
  width: 49px;
  height: 13px;
  margin: 0 2px;
  padding: 0 2px;
  border: 1px solid #3f4346;
  border-radius: 2px;
`;

const PatchSelect = styled.select`
  appearance: none;
  flex: 1;
  min-width: 0;
  height: 11px;
  padding: 0 0 0 2px;
  border: 0;
  background: transparent;
  color: inherit;
  font: inherit;
  line-height: 11px;
`;

const Canvas = styled.div`
  position: relative;
  height: 522px;
`;

const Wires = styled.svg`
  position: absolute;
  inset: 0;
`;

const NodeBox = styled.section`
  position: absolute;
  border: 1px solid ${props => (props.$selected ? '#10695d' : '#4d5154')};
  border-radius: 2px;
  background: ${props => (props.$selected
    ? 'linear-gradient(#117668, #0f6a5d)'
    : 'linear-gradient(#2a2e31, #2d2d32)')};
  box-shadow: 1px 2px 3px #0008;
  color: ${props => (props.$selected ? '#00110e' : '#c8cacc')};
`;

const NodeTitle = styled.h3`
  display: grid;
  grid-template-columns: 10px 1fr;
  gap: 2px;
  align-items: center;
  height: 16px;
  margin: 0;
  padding: 0 9px 0 3px;
  font-size: 7px;
  font-weight: 600;
  text-align: center;
  white-space: nowrap;
`;

const NodePorts = styled.div`
  display: flex;
  justify-content: space-between;
  margin: 0 -4px 2px;
`;

const PortColumn = styled.div`
  display: flex;
  flex-direction: column;
  align-items: ${props => (props.$out ? 'flex-end' : 'flex-start')};
`;

const Port = styled.span`
  height: 12px;
  padding: 0 2px;
  border: 1px solid ${props => PORTS[props.$kind].line};
  border-radius: 2px;
  background: ${props => PORTS[props.$kind].fill};
  color: ${props => PORTS[props.$kind].text};
  font-size: 7px;
  line-height: 10px;
  white-space: nowrap;
`;

const ShotStatus = styled.div`
  display: flex;
  align-items: center;
  justify-content: flex-end;
  gap: 3px;
  height: 12px;
  padding-right: 9px;
  border-top: 1px solid #3c4144;
`;

const ZoomStep = styled.button`
  display: grid;
  place-items: center;
  width: 8px;
  height: 8px;
  border-radius: 1px;
  background: #3f4346;
`;

const ZoomRange = styled.input`
  appearance: none;
  width: 48px;
  height: 3px;
  margin: 0;
  background: linear-gradient(to right, #147d70 60%, #46494c 60%);
  &::-webkit-slider-thumb {
    appearance: none;
    width: 7px;
    height: 7px;
    border: 1px solid #55595c;
    border-radius: 50%;
    background: #2c3033;
  }
`;

const ZoomValue = styled.input`
  width: 20px;
  height: 9px;
  margin-left: 2px;
  padding: 0;
  border: 0;
  background: #1d2023;
  color: inherit;
  font: inherit;
  font-size: 5px;
  text-align: center;
`;

const ShotPanel = styled.div`
  display: flex;
  align-items: center;
  height: 25px;
  background: #202427;
`;

const ShotLogo = styled.span`
  display: grid;
  place-items: center;
  width: 27px;
`;

const ShotTaskList = styled.div`
  display: grid;
  grid-template-columns: repeat(24, 1fr);
  width: 844px;
  height: 25px;
`;

const TaskButton = styled.button`
  display: grid;
  place-items: center;
  border-top: ${props => (props.$small ? 1 : 3)}px solid transparent;
  border-bottom: ${props => (props.$small ? 0 : 3)}px solid transparent;
  ${props => !props.$small && css`width: 82px; height: 60px;`}
  ${props => props.$small && css`margin-right: 1px;`}
  ${props => props.$state === 'open' && css`
    background: ${COLORS.panelItem};
    border-color: ${COLORS.panelItem};
  `}
  ${props => props.$state === 'raised' && css`
    background: #3f4245;
    border-color: #6f7173 transparent #3f4245;
  `}
  ${props => props.$state === 'active' && css`
    background: ${COLORS.accent};
    border-color: ${COLORS.accentLine} transparent ${COLORS.accent};
  `}
`;

const ShotTray = styled.div`
  display: flex;
  align-items: center;
  gap: 4px;
  margin-left: auto;
  padding-right: 5px;
`;

const ShotClock = styled.time`
  display: flex;
  flex-direction: column;
  align-items: center;
  margin: 0 1px;
  color: #d8dadc;
  font-size: 8px;
  line-height: 10px;
  > span { font-size: 10px; }
`;

const PwMark = () => (
  <svg width="10" height="9" fill="none" stroke="#d4d6d8"><path d="M1 9V2h2q1 0 1 2T1 6M5 1v3h2V1v3h2V1" /></svg>
);

const AlsaMark = () => (
  <svg width="10" height="7" fill="#d4d6d8"><path d="M0 0h3v4H0zM4 0h2v4H4zM7 0h3v4H7zM0 5h10v1H0z" /></svg>
);

const JackMark = () => (
  <svg width="10" height="7" fill="none" stroke="#d4d6d8"><path d="M2 1h7M1 3h3M6 3h3M0 6h9M4 1v4M8 2l-2 3" /></svg>
);

const NODE_MARKS = {
  pw: <PwMark />,
  alsa: <AlsaMark />,
  jack: <JackMark />,
  mixer: <Art name="mixer" size={11} />,
};

const Ports = ({ list = [], out }) => (
  <PortColumn $out={out}>
    {list.map(port => <Port key={port.name} $kind={port.kind}>{port.name}</Port>)}
  </PortColumn>
);

const Node = ({ node }) => (
  <NodeBox style={{ left: node.x, top: node.y - 44, width: node.w }} $selected={node.selected}>
    <NodeTitle>{NODE_MARKS[node.icon]}<span>{node.title}</span></NodeTitle>
    <NodePorts>
      <Ports list={node.in} />
      <Ports list={node.out} out />
    </NodePorts>
  </NodeBox>
);

const WireLayer = () => (
  <Wires width="1440" height="522" viewBox="0 44 1440 522" fill="none" stroke="#008f00">
    <path d="M406 213c14 0 18-8 35-8M406 225c14 0 18 11 35 11" strokeWidth="1.5" />
    {WIRES.map(([x1, y1, x2, y2, color = '#008f00']) => {
      const mx = (x1 + x2) / 2;
      const my = (y1 + y2) / 2;
      return (
        <g key={`${x1}-${y1}`} stroke={color}>
          <path d={`M${x1} ${y1}L${x2} ${y2}`} />
          <path d={`M${mx - 3} ${my - 2}l5 2-5 2z`} fill={color} stroke="none" />
        </g>
      );
    })}
  </Wires>
);

const TOOLS = [
  { label: 'New', w: 30, d: 'M1 0h3l2 2v6H1z' },
  { label: 'Open', w: 30, d: 'M0 1h3v1h4v2h1L6 8H0z' },
  { select: true },
  { label: 'Save', w: 30, off: true, d: 'M0 1h7v7H0z' },
  { sep: true },
  { label: 'Activated', w: 41, checked: true, d: 'M3 0h2v4H3zM3 5h1l-1 3z' },
  { label: 'Exclusive', w: 40, checked: true, d: 'M4 0a4 4 0 1 0 1 0v5H3V1z' },
  { gap: true },
  { label: 'Edit', w: 28, d: 'M0 8l1-3 5-5 1 1-5 6z' },
  { label: 'Pin', w: 27, off: true, d: 'M4 0l4 3-3 2-1 2-1-2-3 3 2-4-1-1 3-1z' },
  { label: 'Unpin', w: 38, off: true, d: 'M0 0l8 8H7L0 1zM4 0l4 3-4 4-4 1z' },
  { sep: true },
  { label: 'Connect', w: 41, d: 'M0 8l2-4 2-1 3-3 1 1-3 3-2 3z' },
  { label: 'Disconnect', w: 46, off: true, d: 'M0 0l8 8H6L0 1zM8 0L2 8H0z' },
  { sep: true },
  { label: 'Undo Move', w: 48, d: 'M0 3l3-3v2q4 0 4 5H6q0-3-3-3v2z' },
  { label: 'Redo', w: 32, off: true, d: 'M8 3L5 0v2q-4 0-4 5h1q0-3 3-3v2z' },
  { sep: true },
  { label: 'Center', w: 37, ring: true, d: 'M3 3h2v2H3z' },
  { sep: true },
  { label: 'Zoom In', w: 40, ring: true, d: 'M0 8l2-2' },
  { label: 'Zoom Out', w: 45, ring: true, d: 'M2 4h4v1H2z' },
  { sep: true },
  { label: 'Zoom Fit', w: 40, ring: true, d: 'M3 3h2v2H3z' },
  { label: 'Zoom Reset', w: 50, ring: true, d: 'M4 2h1v4H4z' },
  { sep: true },
  { label: 'Zoom Range', w: 48, ring: true, d: 'M0 0h2v1H0zM6 0h2v1H6zM0 7h2v1H0z' },
];

const ToolGap = styled.span`
  width: 4px;
`;

const renderTool = (tool, i) => {
  if (tool.sep) return <ShotSep key={i} />;
  if (tool.gap) return <ToolGap key={i} />;
  if (tool.select) {
    return (
      <PatchPicker key={i}>
        <svg width="6" height="8"><path d="M0 0h4l2 2v6H0z" fill="#aeb9c4" /></svg>
        <PatchSelect aria-label="Patchbay" defaultValue="Pipe3"><option>Pipe3</option></PatchSelect>
        <ChevronDown size={7} />
      </PatchPicker>
    );
  }
  return (
    <ShotTool key={i} $w={tool.w} $off={tool.off} $checked={tool.checked}>
      <svg width="8" height="8" fill="currentColor">
        {tool.ring && <path d="M7 4A3 3 0 1 1 2 2a3 3 0 0 1 5 2zM2 6L0 8" fill="none" stroke="currentColor" />}
        <path d={tool.d} />
      </svg>
      {tool.label}
    </ShotTool>
  );
};

const GraphShot = () => (
  <Shot>
    <ShotHead>
      <ShotTitle>
        <Art name="pipes" size={8} />
        <span>Pipe3 — A PipeWire Graph Qt GUI Interface</span>
        <ShotControls><ChevronDown size={6} /><ChevronUp size={6} /><X size={6} /></ShotControls>
      </ShotTitle>
      <ShotMenu>
        <span>Graph</span><span>Patchbay</span><span>Edit</span><span>View</span><span>Help</span>
      </ShotMenu>
      <ShotTools>
        <ShotSep />
        {TOOLS.map(renderTool)}
      </ShotTools>
    </ShotHead>
    <Canvas>
      {NODES.map(node => <Node key={`${node.x}-${node.y}`} node={node} />)}
      <WireLayer />
    </Canvas>
    <ShotStatus>
      <ZoomStep aria-label="Zoom out"><Search size={6} strokeWidth={3} /></ZoomStep>
      <ZoomRange type="range" aria-label="Zoom" defaultValue="60" />
      <ZoomStep aria-label="Zoom in"><Search size={6} strokeWidth={3} /></ZoomStep>
      <ZoomValue aria-label="Zoom percent" defaultValue="122%" />
      <svg width="6" height="8" fill="none" stroke="#b0b2b4"><path d="M1 3l2-2 2 2M1 5l2 2 2-2" /></svg>
    </ShotStatus>
    <ShotPanel>
      <ShotLogo><Art name="cachy" size={20} /></ShotLogo>
      <ShotTaskList>
        {SHOT_TASKS.map((task, i) => (
          <TaskButton key={i} aria-label={task.label} $state={task.state} $small><Art name={task.icon} size={20} /></TaskButton>
        ))}
      </ShotTaskList>
      <ShotTray>
        {TRAY.map(name => <Art key={name} name={name} size={9} />)}
        <ShotClock><span>13:13</span>26.03.26</ShotClock>
        <svg width="10" height="11" fill="none" stroke="#ccc"><path d="M1 1h8v9H1zM1 8h8" /></svg>
      </ShotTray>
    </ShotPanel>
  </Shot>
);

// small preview, centre-cropped like an object-fit: cover image
const Preview = () => (
  <svg width="138" height="102" viewBox="0 0 1440 603" preserveAspectRatio="xMidYMid slice">
    <rect width="1440" height="603" fill="#24282b" />
    <rect width="1440" height="44" fill="#2c3033" />
    <path d="M500 30h240" stroke="#888" strokeWidth="6" strokeDasharray="8 32" />
    {NODES.map(node => {
      const rows = Math.max((node.in || []).length, (node.out || []).length);
      const bar = (port, i, right) => {
        const w = port.name.length * 4 + 6;
        return (
          <g key={`${right}-${port.name}`}>
            <rect x={right ? node.x + node.w + 3 - w : node.x - 3} y={node.y + 17 + i * 12} width={w} height="12" fill={PORTS[port.kind].fill} />
            <path d={`M${right ? node.x + node.w - w + 6 : node.x} ${node.y + 23 + i * 12}h${w - 6}`} stroke={PORTS[port.kind].text} strokeOpacity="0.6" strokeWidth="5" strokeDasharray="9 5" />
          </g>
        );
      };
      return (
        <g key={`${node.x}-${node.y}`}>
          <rect x={node.x} y={node.y} width={node.w} height={rows * 12 + 20} fill={node.selected ? '#117668' : '#2d3034'} stroke={node.selected ? 'none' : '#4d5154'} strokeWidth="2" />
          <path d={`M${node.x + 14} ${node.y + 9}h${node.w - 26}`} stroke="#aaa" strokeWidth="5" strokeDasharray="8 7" />
          {(node.in || []).map((port, i) => bar(port, i, false))}
          {(node.out || []).map((port, i) => bar(port, i, true))}
        </g>
      );
    })}
    <path d="M937 333h78M937 350h78" stroke="#008f00" strokeWidth="4" />
    <path d="M0 580h1440" stroke="#4a4e51" strokeWidth="6" />
    <path d="M330 600h560" stroke="#999" strokeWidth="8" strokeDasharray="14 22" />
  </svg>
);

/* ---------- desktop panel ---------- */

const Panel = styled.footer`
  display: flex;
  align-items: center;
  height: 60px;
  flex: none;
  background: ${COLORS.panel};
`;

const Launcher = styled.button`
  display: grid;
  place-items: center;
  width: 65px;
  height: 60px;
`;

const TaskList = styled.div`
  display: flex;
  gap: 2px;
`;

const Tray = styled.div`
  display: flex;
  align-items: center;
  gap: 8px;
  margin-left: auto;
  padding-right: 12px;
`;

const Clock = styled.time`
  display: flex;
  flex-direction: column;
  align-items: center;
  margin-right: 4px;
  font-size: 20px;
  line-height: 22px;
  > span { font-size: 24px; line-height: 24px; }
`;

const ShowDesktop = styled.button`
  display: grid;
  width: 24px;
  height: 24px;
`;

const DesktopPanel = () => (
  <Panel>
    <Launcher aria-label="Application launcher"><Art name="cachy" size={48} /></Launcher>
    <TaskList>
      {TASKS.map((task, i) => (
        <TaskButton key={i} aria-label={task.label} $state={task.state}><Art name={task.icon} size={48} /></TaskButton>
      ))}
    </TaskList>
    <Tray>
      {TRAY.map(name => <Art key={name} name={name} size={22} />)}
      <Clock><span>20:13</span>26.03.26</Clock>
      <ShowDesktop aria-label="Show desktop">
        <svg width="24" height="24" fill="none" stroke="#fff"><path d="M0.500 0.500h23v23h-23zM3 20.500h18" /></svg>
      </ShowDesktop>
    </Tray>
  </Panel>
);

const App = () => (
  <Screen>
    <GlobalStyle />
    <BrowserChrome />
    <Viewport>
      <ForumPage />
      <Lightbox role="dialog" aria-label="1774527193132.png">
        <LightboxBar>
          <Counter>1 / 2</Counter>
          {['zoom', 'open', 'full', 'play', 'down', 'grid', 'close'].map(name => (
            <BarButton key={name} aria-label={name}><Line name={name} /></BarButton>
          ))}
        </LightboxBar>
        <Stage>
          <Arrow aria-label="Previous">
            <svg width="20" height="36" fill="none" stroke="currentColor" strokeWidth="4" strokeLinecap="round"><path d="M17 3L3 18l14 15" /></svg>
          </Arrow>
          <Figure>
            <GraphShot />
            <Caption>
              <CaptionTitle>1774527193132.png</CaptionTitle>
              <span>coxon · 26. März 2026 um 13:17</span>
            </Caption>
          </Figure>
          <Arrow aria-label="Next">
            <svg width="20" height="36" fill="none" stroke="currentColor" strokeWidth="4" strokeLinecap="round"><path d="M3 3l14 15L3 33" /></svg>
          </Arrow>
        </Stage>
        <Thumbs>
          <Thumb aria-label="Image 1"><Preview /></Thumb>
        </Thumbs>
      </Lightbox>
    </Viewport>
    <DesktopPanel />
  </Screen>
);

export default App;
